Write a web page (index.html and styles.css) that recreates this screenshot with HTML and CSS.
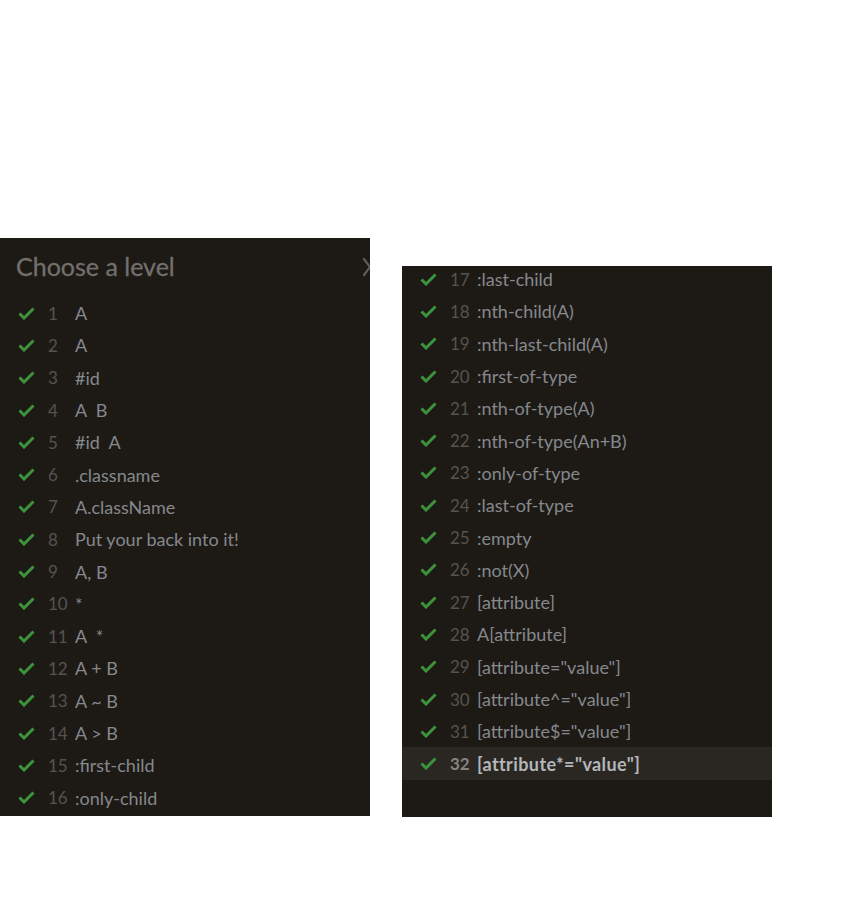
FILE: index.html
```html
<!DOCTYPE html>
<html>
<head>
<meta charset="utf-8">
<link rel="stylesheet" href="styles.css">
</head>
<body>
<div class="stage">
  <section class="panel panel-left">
    <header class="panel-head">
      <h2 class="title">Choose a level</h2>
      <span class="close"><svg width="16" height="20" viewBox="0 0 16 20"><path d="M2 2 L14 18 M14 2 L2 18" stroke="#5f5d5a" stroke-width="2.2" fill="none" stroke-linecap="round"/></svg></span>
    </header>
    <ul class="levels">
      <li class="level"><svg class="check" viewBox="0 0 17 13"><path d="M1.5 6.5 L6 11 L15.5 1.5" stroke="#3c933c" stroke-width="3" fill="none"/></svg><span class="num">1</span><span class="name">A</span></li>
      <li class="level"><svg class="check" viewBox="0 0 17 13"><path d="M1.5 6.5 L6 11 L15.5 1.5" stroke="#3c933c" stroke-width="3" fill="none"/></svg><span class="num">2</span><span class="name">A</span></li>
      <li class="level"><svg class="check" viewBox="0 0 17 13"><path d="M1.5 6.5 L6 11 L15.5 1.5" stroke="#3c933c" stroke-width="3" fill="none"/></svg><span class="num">3</span><span class="name">#id</span></li>
      <li class="level"><svg class="check" viewBox="0 0 17 13"><path d="M1.5 6.5 L6 11 L15.5 1.5" stroke="#3c933c" stroke-width="3" fill="none"/></svg><span class="num">4</span><span class="name">A&nbsp;&nbsp;B</span></li>
      <li class="level"><svg class="check" viewBox="0 0 17 13"><path d="M1.5 6.5 L6 11 L15.5 1.5" stroke="#3c933c" stroke-width="3" fill="none"/></svg><span class="num">5</span><span class="name">#id&nbsp;&nbsp;A</span></li>
      <li class="level"><svg class="check" viewBox="0 0 17 13"><path d="M1.5 6.5 L6 11 L15.5 1.5" stroke="#3c933c" stroke-width="3" fill="none"/></svg><span class="num">6</span><span class="name">.classname</span></li>
      <li class="level"><svg class="check" viewBox="0 0 17 13"><path d="M1.5 6.5 L6 11 L15.5 1.5" stroke="#3c933c" stroke-width="3" fill="none"/></svg><span class="num">7</span><span class="name">A.className</span></li>
      <li class="level"><svg class="check" viewBox="0 0 17 13"><path d="M1.5 6.5 L6 11 L15.5 1.5" stroke="#3c933c" stroke-width="3" fill="none"/></svg><span class="num">8</span><span class="name">Put your back into it!</span></li>
      <li class="level"><svg class="check" viewBox="0 0 17 13"><path d="M1.5 6.5 L6 11 L15.5 1.5" stroke="#3c933c" stroke-width="3" fill="none"/></svg><span class="num">9</span><span class="name">A, B</span></li>
      <li class="level"><svg class="check" viewBox="0 0 17 13"><path d="M1.5 6.5 L6 11 L15.5 1.5" stroke="#3c933c" stroke-width="3" fill="none"/></svg><span class="num">10</span><span class="name">*</span></li>
      <li class="level"><svg class="check" viewBox="0 0 17 13"><path d="M1.5 6.5 L6 11 L15.5 1.5" stroke="#3c933c" stroke-width="3" fill="none"/></svg><span class="num">11</span><span class="name">A&nbsp;&nbsp;*</span></li>
      <li class="level"><svg class="check" viewBox="0 0 17 13"><path d="M1.5 6.5 L6 11 L15.5 1.5" stroke="#3c933c" stroke-width="3" fill="none"/></svg><span class="num">12</span><span class="name">A + B</span></li>
      <li class="level"><svg class="check" viewBox="0 0 17 13"><path d="M1.5 6.5 L6 11 L15.5 1.5" stroke="#3c933c" stroke-width="3" fill="none"/></svg><span class="num">13</span><span class="name">A ~ B</span></li>
      <li class="level"><svg class="check" viewBox="0 0 17 13"><path d="M1.5 6.5 L6 11 L15.5 1.5" stroke="#3c933c" stroke-width="3" fill="none"/></svg><span class="num">14</span><span class="name">A &gt; B</span></li>
      <li class="level"><svg class="check" viewBox="0 0 17 13"><path d="M1.5 6.5 L6 11 L15.5 1.5" stroke="#3c933c" stroke-width="3" fill="none"/></svg><span class="num">15</span><span class="name">:first-child</span></li>
      <li class="level"><svg class="check" viewBox="0 0 17 13"><path d="M1.5 6.5 L6 11 L15.5 1.5" stroke="#3c933c" stroke-width="3" fill="none"/></svg><span class="num">16</span><span class="name">:only-child</span></li>
    </ul>
  </section>

  <section class="panel panel-right">
    <ul class="levels levels-scrolled">
      <li class="level"><svg class="check" viewBox="0 0 17 13"><path d="M1.5 6.5 L6 11 L15.5 1.5" stroke="#3c933c" stroke-width="3" fill="none"/></svg><span class="num">17</span><span class="name">:last-child</span></li>
      <li class="level"><svg class="check" viewBox="0 0 17 13"><path d="M1.5 6.5 L6 11 L15.5 1.5" stroke="#3c933c" stroke-width="3" fill="none"/></svg><span class="num">18</span><span class="name">:nth-child(A)</span></li>
      <li class="level"><svg class="check" viewBox="0 0 17 13"><path d="M1.5 6.5 L6 11 L15.5 1.5" stroke="#3c933c" stroke-width="3" fill="none"/></svg><span class="num">19</span><span class="name">:nth-last-child(A)</span></li>
      <li class="level"><svg class="check" viewBox="0 0 17 13"><path d="M1.5 6.5 L6 11 L15.5 1.5" stroke="#3c933c" stroke-width="3" fill="none"/></svg><span class="num">20</span><span class="name">:first-of-type</span></li>
      <li class="level"><svg class="check" viewBox="0 0 17 13"><path d="M1.5 6.5 L6 11 L15.5 1.5" stroke="#3c933c" stroke-width="3" fill="none"/></svg><span class="num">21</span><span class="name">:nth-of-type(A)</span></li>
      <li class="level"><svg class="check" viewBox="0 0 17 13"><path d="M1.5 6.5 L6 11 L15.5 1.5" stroke="#3c933c" stroke-width="3" fill="none"/></svg><span class="num">22</span><span class="name">:nth-of-type(An+B)</span></li>
      <li class="level"><svg class="check" viewBox="0 0 17 13"><path d="M1.5 6.5 L6 11 L15.5 1.5" stroke="#3c933c" stroke-width="3" fill="none"/></svg><span class="num">23</span><span class="name">:only-of-type</span></li>
      <li class="level"><svg class="check" viewBox="0 0 17 13"><path d="M1.5 6.5 L6 11 L15.5 1.5" stroke="#3c933c" stroke-width="3" fill="none"/></svg><span class="num">24</span><span class="name">:last-of-type</span></li>
      <li class="level"><svg class="check" viewBox="0 0 17 13"><path d="M1.5 6.5 L6 11 L15.5 1.5" stroke="#3c933c" stroke-width="3" fill="none"/></svg><span class="num">25</span><span class="name">:empty</span></li>
      <li class="level"><svg class="check" viewBox="0 0 17 13"><path d="M1.5 6.5 L6 11 L15.5 1.5" stroke="#3c933c" stroke-width="3" fill="none"/></svg><span class="num">26</span><span class="name">:not(X)</span></li>
      <li class="level"><svg class="check" viewBox="0 0 17 13"><path d="M1.5 6.5 L6 11 L15.5 1.5" stroke="#3c933c" stroke-width="3" fill="none"/></svg><span class="num">27</span><span class="name">[attribute]</span></li>
      <li class="level"><svg class="check" viewBox="0 0 17 13"><path d="M1.5 6.5 L6 11 L15.5 1.5" stroke="#3c933c" stroke-width="3" fill="none"/></svg><span class="num">28</span><span class="name">A[attribute]</span></li>
      <li class="level"><svg class="check" viewBox="0 0 17 13"><path d="M1.5 6.5 L6 11 L15.5 1.5" stroke="#3c933c" stroke-width="3" fill="none"/></svg><span class="num">29</span><span class="name">[attribute="value"]</span></li>
      <li class="level"><svg class="check" viewBox="0 0 17 13"><path d="M1.5 6.5 L6 11 L15.5 1.5" stroke="#3c933c" stroke-width="3" fill="none"/></svg><span class="num">30</span><span class="name">[attribute^="value"]</span></li>
      <li class="level"><svg class="check" viewBox="0 0 17 13"><path d="M1.5 6.5 L6 11 L15.5 1.5" stroke="#3c933c" stroke-width="3" fill="none"/></svg><span class="num">31</span><span class="name">[attribute$="value"]</span></li>
      <li class="level current"><svg class="check" viewBox="0 0 17 13"><path d="M1.5 6.5 L6 11 L15.5 1.5" stroke="#3c933c" stroke-width="3" fill="none"/></svg><span class="num">32</span><span class="name">[attribute*="value"]</span></li>
    </ul>
  </section>
</div>
</body>
</html>
```

FILE: styles.css
```css
html, body {
  margin: 0;
  padding: 0;
  background: #ffffff;
}

.stage {
  display: flex;
  align-items: flex-start;
  gap: 32px;
}

.panel {
  width: 370px;
  background: #1d1a16;
  overflow: hidden;
  font-family: Lato, "Noto Sans", sans-serif;
}

.panel-left {
  margin-top: 238px;
  height: 578px;
}

.panel-right {
  margin-top: 266px;
  height: 551px;
}

.panel-head {
  height: 59px;
  display: flex;
  align-items: center;
  justify-content: space-between;
  padding-left: 16px;
}

.title {
  margin: 0;
  font-size: 25px;
  font-weight: 400;
  color: #72706c;
  line-height: 1;
  padding-bottom: 2px;
  -webkit-text-stroke: 0.3px #72706c;
}

.close {
  display: flex;
  margin-right: -8px;
  padding-bottom: 2px;
}

.levels {
  list-style: none;
  margin: 0;
  padding: 0;
}

.levels-scrolled {
  margin-top: -3px;
}

.level {
  display: flex;
  align-items: center;
  height: 32.3px;
  padding-left: 18px;
  font-size: 18px;
}

.check {
  width: 17px;
  height: 13px;
  flex: none;
}

.num {
  width: 27px;
  margin-left: 13px;
  color: #55534f;
  font-size: 17px;
  flex: none;
}

.name {
  color: #85888c;
  white-space: nowrap;
}

.level.current {
  background: #2a2723;
}

.level.current .num {
  color: #858380;
  font-weight: 700;
}

.level.current .name {
  color: #b4b6ba;
  font-weight: 700;
  letter-spacing: 0.4px;
}
```
